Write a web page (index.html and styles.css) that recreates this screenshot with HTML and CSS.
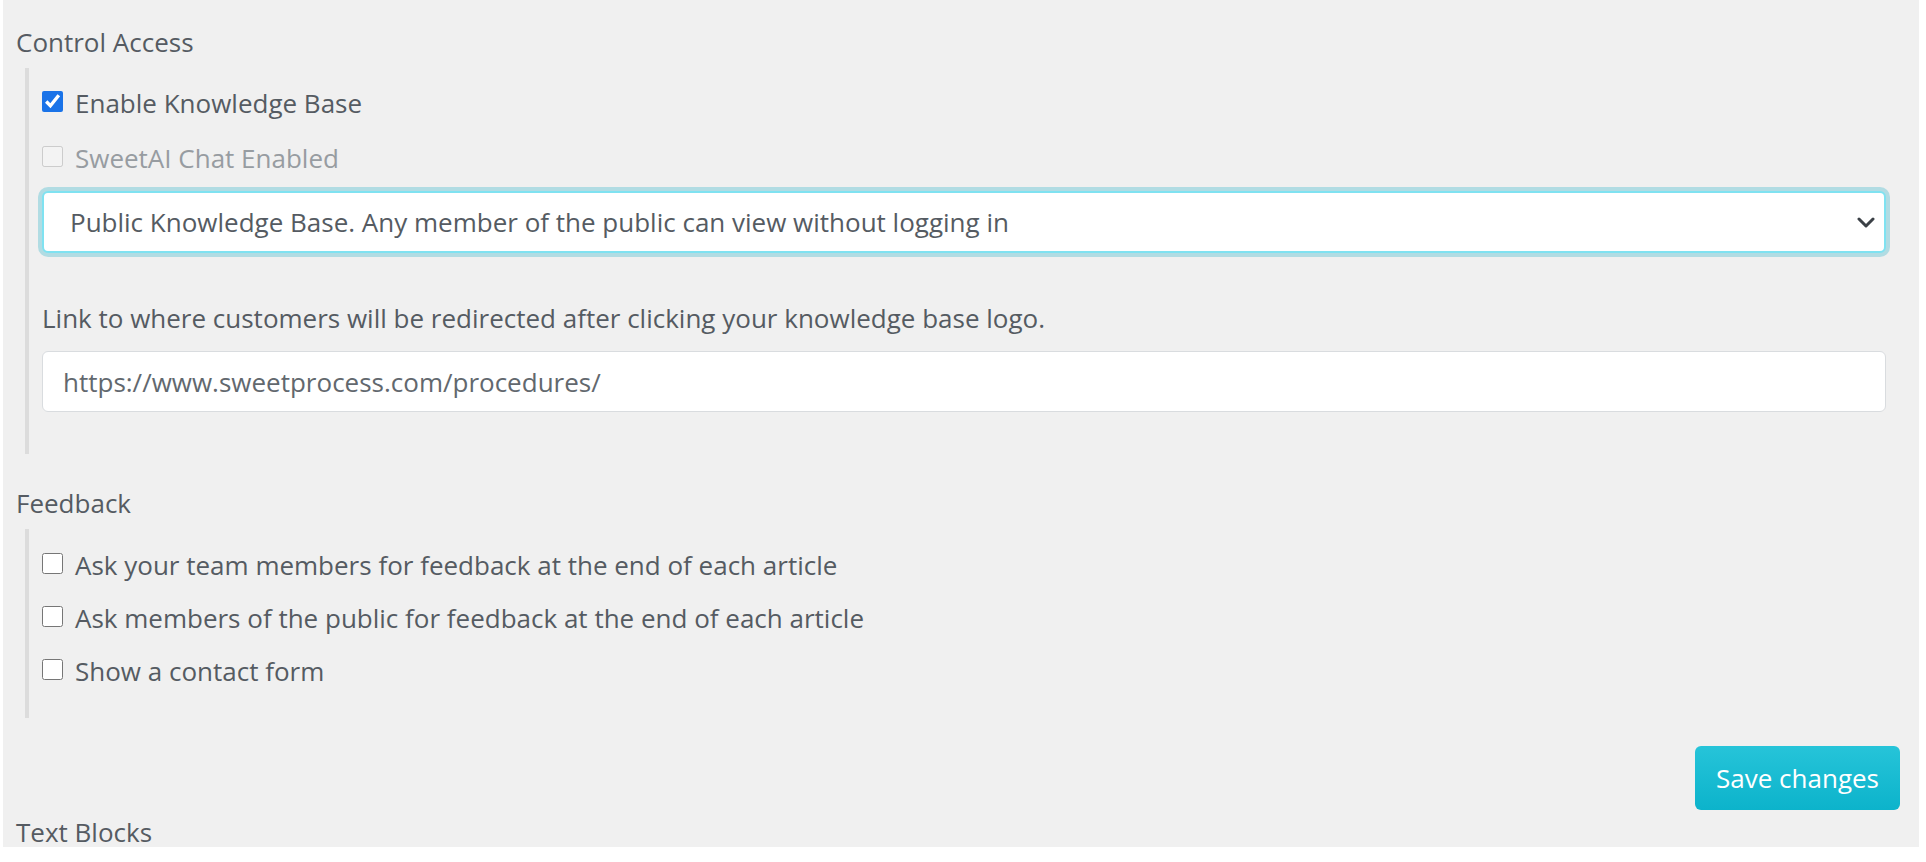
FILE: index.html
```html
<!DOCTYPE html>
<html lang="en">
<head>
    <meta charset="UTF-8">
    <meta name="viewport" content="width=device-width, initial-scale=1.0">
    <title>Knowledge Base Settings</title>
    <link rel="stylesheet" href="styles.css">
</head>
<body>
    <div class="panel">
        <div class="section-title">Control Access</div>
        <div class="group">
            <label class="check-row">
                <input type="checkbox" class="check" checked>
                <span>Enable Knowledge Base</span>
            </label>
            <label class="check-row disabled">
                <input type="checkbox" class="check" disabled>
                <span>SweetAI Chat Enabled</span>
            </label>
            <div class="select-wrap">
                <select class="select">
                    <option>Public Knowledge Base. Any member of the public can view without logging in</option>
                    <option>Private Knowledge Base. Only team members can view</option>
                </select>
                <svg class="chevron" width="18" height="11" viewBox="0 0 18 11">
                    <path d="M2 2 L9 9 L16 2" fill="none" stroke="#3b4046" stroke-width="3" stroke-linecap="round" stroke-linejoin="round"/>
                </svg>
            </div>
            <div class="field-label">Link to where customers will be redirected after clicking your knowledge base logo.</div>
            <input type="text" class="text-input" value="https://www.sweetprocess.com/procedures/">
        </div>

        <div class="section-title feedback-title">Feedback</div>
        <div class="group feedback-group">
            <label class="check-row">
                <input type="checkbox" class="check">
                <span>Ask your team members for feedback at the end of each article</span>
            </label>
            <label class="check-row">
                <input type="checkbox" class="check">
                <span>Ask members of the public for feedback at the end of each article</span>
            </label>
            <label class="check-row">
                <input type="checkbox" class="check">
                <span>Show a contact form</span>
            </label>
        </div>

        <div class="actions">
            <button class="save-button">Save changes</button>
        </div>

        <div class="section-title blocks-title">Text Blocks</div>
    </div>
</body>
</html>
```

FILE: styles.css
```css
body {
    margin: 0;
    background: #fff;
    font-family: "Open Sans", "Noto Sans", Arial, sans-serif;
    font-size: 26px;
    line-height: 32px;
    color: #555b62;
}

.panel {
    margin: 0 7px 0 3px;
    height: 847px;
    overflow: hidden;
    background: #f0f0f0;
    padding: 26px 19px 0 13px;
    box-sizing: border-box;
}

.section-title {
    height: 32px;
}

.group {
    margin: 10px 14px 0 9px;
    border-left: 4px solid #dcdcdc;
    padding: 19px 0 42px 13px;
}

.check-row {
    display: flex;
    align-items: center;
    gap: 12px;
    height: 32px;
    margin-bottom: 23px;
}

.check {
    width: 21px;
    height: 21px;
    margin: 0 0 4px 0;
    accent-color: #1a73e8;
}

.check-row.disabled {
    color: #979ca1;
    margin-bottom: 17px;
}

.select-wrap {
    position: relative;
}

.select {
    width: 100%;
    height: 62px;
    appearance: none;
    background: #fff;
    border: 2px solid #7fe2f1;
    border-radius: 6px;
    box-shadow: 0 0 0 4px rgba(32, 176, 198, 0.3);
    padding: 0 60px 0 26px;
    font-family: inherit;
    font-size: inherit;
    color: #555b62;
    outline: none;
}

.chevron {
    position: absolute;
    right: 11px;
    top: 26px;
}

.field-label {
    margin-top: 49px;
}

.text-input {
    display: block;
    width: 100%;
    height: 61px;
    margin-top: 17px;
    box-sizing: border-box;
    background: #fff;
    border: 1.5px solid #d9dcdf;
    border-radius: 6px;
    padding: 0 20px;
    font-family: inherit;
    font-size: inherit;
    color: #62686e;
    outline: none;
}

.feedback-title {
    margin-top: 33px;
}

.feedback-group {
    padding-top: 20px;
    padding-bottom: 10px;
}

.feedback-group .check-row {
    margin-bottom: 21px;
}

.actions {
    display: flex;
    justify-content: flex-end;
    margin-top: 28px;
}

.save-button {
    height: 64px;
    padding: 0 21px;
    border: none;
    border-radius: 6px;
    background: linear-gradient(#26c4d9, #0cb3cb);
    color: #fff;
    font-family: inherit;
    font-size: 26px;
    cursor: pointer;
}

.blocks-title {
    margin-top: 6px;
}
```
